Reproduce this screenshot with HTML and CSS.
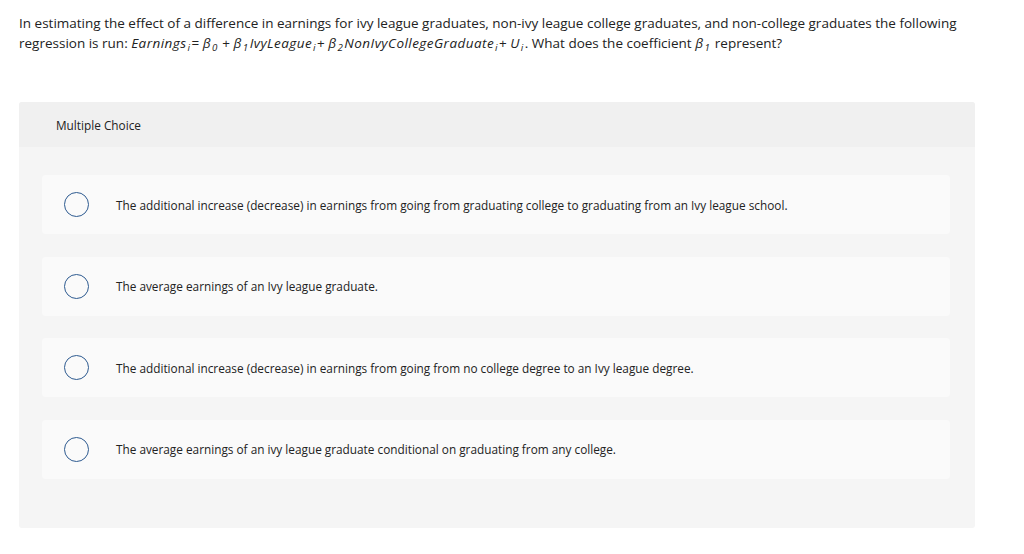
FILE: index.html
```html
<!DOCTYPE html>
<html>
<head>
<meta charset="utf-8">
<link rel="stylesheet" href="styles.css">
</head>
<body>
<div class="page">
  <p class="question">In estimating the effect of a difference in earnings for ivy league graduates, non-ivy league college graduates, and non-college graduates the following regression is run: <i>Earnings<sub>i</sub></i>= <i>β<sub>0</sub></i> + <i>β<sub>1</sub>IvyLeague<sub>i</sub></i>+ <i>β<sub>2</sub>NonIvyCollegeGraduate<sub>i</sub></i>+ <i>U<sub>i</sub></i>. What does the coefficient <i>β<sub>1</sub></i> represent?</p>
  <div class="panel">
    <div class="panel-head">Multiple Choice</div>
    <div class="panel-body">
      <div class="option"><span class="radio"></span><span class="label">The additional increase (decrease) in earnings from going from graduating college to graduating from an Ivy league school.</span></div>
      <div class="option"><span class="radio"></span><span class="label">The average earnings of an Ivy league graduate.</span></div>
      <div class="option"><span class="radio"></span><span class="label">The additional increase (decrease) in earnings from going from no college degree to an Ivy league degree.</span></div>
      <div class="option"><span class="radio"></span><span class="label">The average earnings of an ivy league graduate conditional on graduating from any college.</span></div>
    </div>
  </div>
</div>
</body>
</html>
```
FILE: styles.css
```css
html, body { margin: 0; padding: 0; background: #fff; }
body { font-family: "Open Sans", "Liberation Sans", sans-serif; color: #222; }
.page { padding: 13px 0 0 19px; width: 960px; }
.question { margin: 0; font-size: 13.5px; line-height: 20px; }
.question i { letter-spacing: 0.45px; }
.question sub { font-size: 72%; vertical-align: -3px; line-height: 0; padding: 0 1px; }
.panel { margin-top: 49px; width: 956px; border-radius: 3px; overflow: hidden; background: #f5f5f5; }
.panel-head { background: #f0f0f0; height: 45px; display: flex; align-items: center; padding-left: 37px; font-size: 11.8px; color: #222; }
.panel-body { padding: 28px 25px 49px 23px; display: flex; flex-direction: column; gap: 22.5px; }
.option { background: #fafafa; border-radius: 4px; height: 59px; display: flex; align-items: center; padding-left: 22px; }
.radio { width: 23px; height: 23px; border: 1px solid #2d5a90; border-radius: 50%; box-sizing: content-box; flex: none; }
.label { margin-left: 27px; font-size: 11.8px; color: #222; }
```
